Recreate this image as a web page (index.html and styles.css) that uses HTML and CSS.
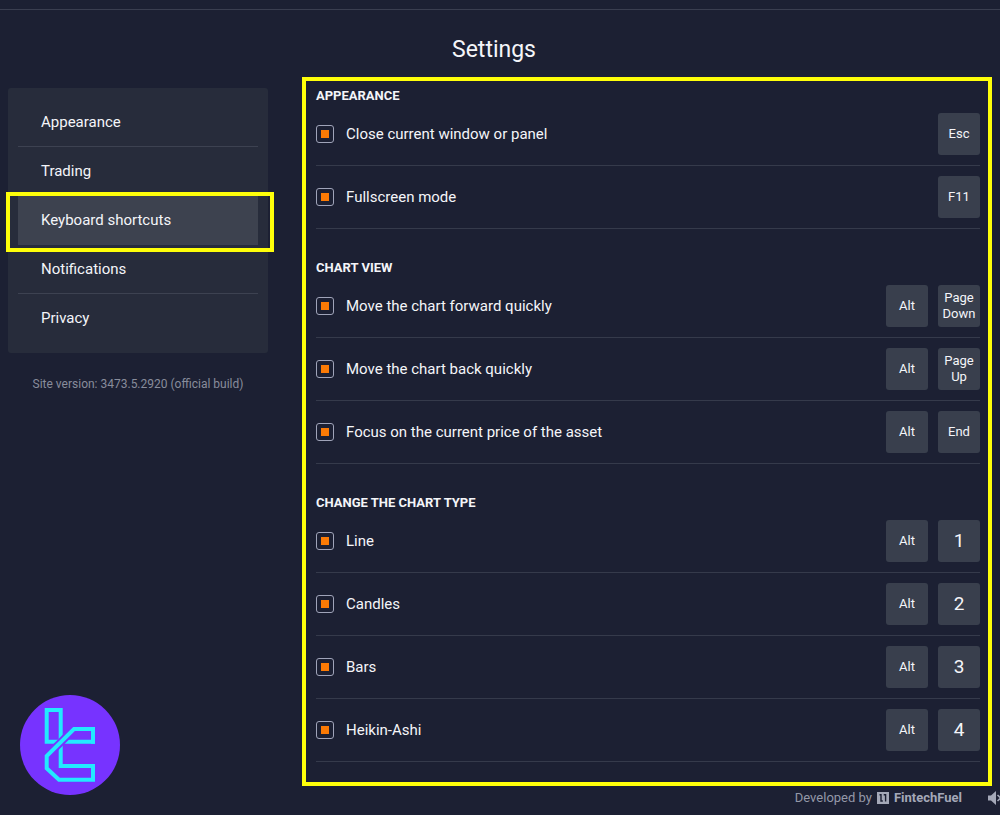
FILE: index.html
```html
<!DOCTYPE html>
<html lang="en">
<head>
<meta charset="utf-8">
<title>Settings</title>
<link rel="stylesheet" href="styles.css">
</head>
<body>
<div class="page">
  <header class="page-header"><h1 class="title">Settings</h1></header>
  <div class="layout">
    <aside class="sidebar">
      <nav class="menu">
        <a class="menu-item" href="#appearance">Appearance</a>
        <a class="menu-item" href="#trading">Trading</a>
        <a class="menu-item active" href="#shortcuts" aria-current="page">Keyboard shortcuts</a>
        <a class="menu-item" href="#notifications">Notifications</a>
        <a class="menu-item" href="#privacy">Privacy</a>
      </nav>
      <p class="version">Site version: 3473.5.2920 (official build)</p>
    </aside>
    <main class="panel">
      <section class="group">
        <h2 class="group-title">APPEARANCE</h2>
        <div class="row"><label class="option"><input class="check" type="checkbox" checked>Close current window or panel</label><kbd class="key">Esc</kbd></div>
        <div class="row"><label class="option"><input class="check" type="checkbox" checked>Fullscreen mode</label><kbd class="key">F11</kbd></div>
      </section>
      <section class="group">
        <h2 class="group-title">CHART VIEW</h2>
        <div class="row"><label class="option"><input class="check" type="checkbox" checked>Move the chart forward quickly</label><kbd class="key">Alt</kbd><kbd class="key">Page Down</kbd></div>
        <div class="row"><label class="option"><input class="check" type="checkbox" checked>Move the chart back quickly</label><kbd class="key">Alt</kbd><kbd class="key">Page Up</kbd></div>
        <div class="row"><label class="option"><input class="check" type="checkbox" checked>Focus on the current price of the asset</label><kbd class="key">Alt</kbd><kbd class="key">End</kbd></div>
      </section>
      <section class="group">
        <h2 class="group-title">CHANGE THE CHART TYPE</h2>
        <div class="row"><label class="option"><input class="check" type="checkbox" checked>Line</label><kbd class="key">Alt</kbd><kbd class="key digit">1</kbd></div>
        <div class="row"><label class="option"><input class="check" type="checkbox" checked>Candles</label><kbd class="key">Alt</kbd><kbd class="key digit">2</kbd></div>
        <div class="row"><label class="option"><input class="check" type="checkbox" checked>Bars</label><kbd class="key">Alt</kbd><kbd class="key digit">3</kbd></div>
        <div class="row"><label class="option"><input class="check" type="checkbox" checked>Heikin-Ashi</label><kbd class="key">Alt</kbd><kbd class="key digit">4</kbd></div>
      </section>
    </main>
  </div>
  <footer class="footer">
    <span>Developed by</span>
    <svg class="maker-icon" viewBox="0 0 12 12" aria-hidden="true"><rect width="12" height="12" fill="#a4a8b8"/><path d="M2.5 2.7H4V9H5.8M6.7 2.7H8.6V9.6" fill="none" stroke="#1c2033" stroke-width="1.4"/></svg>
    <span class="maker">FintechFuel</span>
    <button class="sound" aria-label="Sound off"><svg class="sound-icon" viewBox="0 0 18 14" aria-hidden="true"><path d="M0 4.5H3L8 0V14L3 9.5H0Z" fill="#a4a8b8"/><path d="M9.5 4L16 10M16 4L9.5 10" stroke="#a4a8b8" stroke-width="1.6"/></svg></button>
  </footer>
  <svg class="brand" viewBox="0 0 100 100" role="img" aria-label="Logo">
    <circle cx="50" cy="50" r="50" fill="#7733ff"/>
    <g fill="none" stroke="#22eaff" stroke-width="4">
      <path d="M40.7 48V15H26.7V46.7H44"/>
      <path d="M44 46.7H73V34H54"/>
      <path d="M40.7 48V71H73"/>
      <path d="M56 32L25 63" stroke="#7733ff" stroke-width="8"/>
      <path d="M73 48.7V34H54L26.7 61V73.3L39 84.7H73V71H60"/>
    </g>
  </svg>
</div>
</body>
</html>
```
FILE: styles.css
```css
* { box-sizing: border-box; }
body {
  margin: 0;
  background: #1c2033;
  color: #f4f5f9;
  font-family: Roboto, "Liberation Sans", sans-serif;
  font-size: 15px;
}
.page {
  position: relative;
  min-height: 100vh;
  padding-top: 9px;
  overflow: hidden;
}
.page-header {
  border-top: 1px solid #3a3e50;
  padding: 24px 12px 12px 0;
  text-align: center;
}
.title {
  margin: 0;
  font-size: 23px;
  line-height: 31px;
  font-weight: 400;
}
.layout {
  display: flex;
  align-items: flex-start;
  gap: 34px;
  padding: 0 8px;
}
.sidebar {
  flex: 0 0 260px;
  padding-top: 11px;
}
.menu {
  display: flex;
  flex-direction: column;
  padding: 10px;
  border-radius: 3px;
  background: #272c3b;
}
.menu-item {
  position: relative;
  padding: 0 23px;
  border-bottom: 1px solid #3d4251;
  color: inherit;
  line-height: 48px;
  text-decoration: none;
}
.menu-item:last-child { border-bottom-color: transparent; }
.menu-item.active {
  background: #3d424f;
}
.menu-item.active::after {
  content: "";
  position: absolute;
  inset: -4px -16px -8px -12px;
  border: 4px solid #ffff0a;
}
.version {
  margin: 22px 0 0;
  color: #888c9b;
  font-size: 12px;
  line-height: 18px;
  text-align: center;
}
.panel {
  flex: 1;
  padding: 7px 8px 20px 10px;
  border: 4px solid #ffff0a;
}
.group + .group { padding-top: 31px; }
.group-title {
  margin: 0;
  font-size: 13px;
  line-height: 15px;
  font-weight: 700;
}
.row {
  display: flex;
  align-items: center;
  gap: 10px;
  padding: 10px 0;
  border-bottom: 1px solid #353a4b;
}
.option {
  display: flex;
  flex: 1;
  align-items: center;
  gap: 12px;
}
.check {
  appearance: none;
  display: grid;
  place-items: center;
  width: 18px;
  height: 18px;
  margin: 0;
  border: 1px solid #a0a4b9;
  border-radius: 3px;
}
.check:checked::before {
  content: "";
  width: 8px;
  height: 8px;
  background: #fb7a05;
}
.key {
  display: flex;
  align-items: center;
  justify-content: center;
  width: 42px;
  height: 42px;
  border-radius: 3px;
  background: #393f4d;
  font-family: inherit;
  font-size: 13px;
  line-height: 16px;
  text-align: center;
}
.digit { font-size: 19px; }
.footer {
  display: flex;
  align-items: center;
  justify-content: flex-end;
  gap: 5px;
  padding-top: 4px;
  color: #9498a8;
  font-size: 13px;
  line-height: 16px;
}
.maker-icon { width: 12px; height: 12px; }
.maker { font-weight: 700; color: #a4a8b8; }
.sound {
  display: flex;
  width: 12px;
  margin-left: 21px;
  padding: 0;
  border: 0;
  background: none;
  overflow: hidden;
}
.sound-icon { flex: none; width: 18px; height: 14px; }
.brand {
  position: absolute;
  left: 20px;
  bottom: 20px;
  width: 100px;
  height: 100px;
}
```
